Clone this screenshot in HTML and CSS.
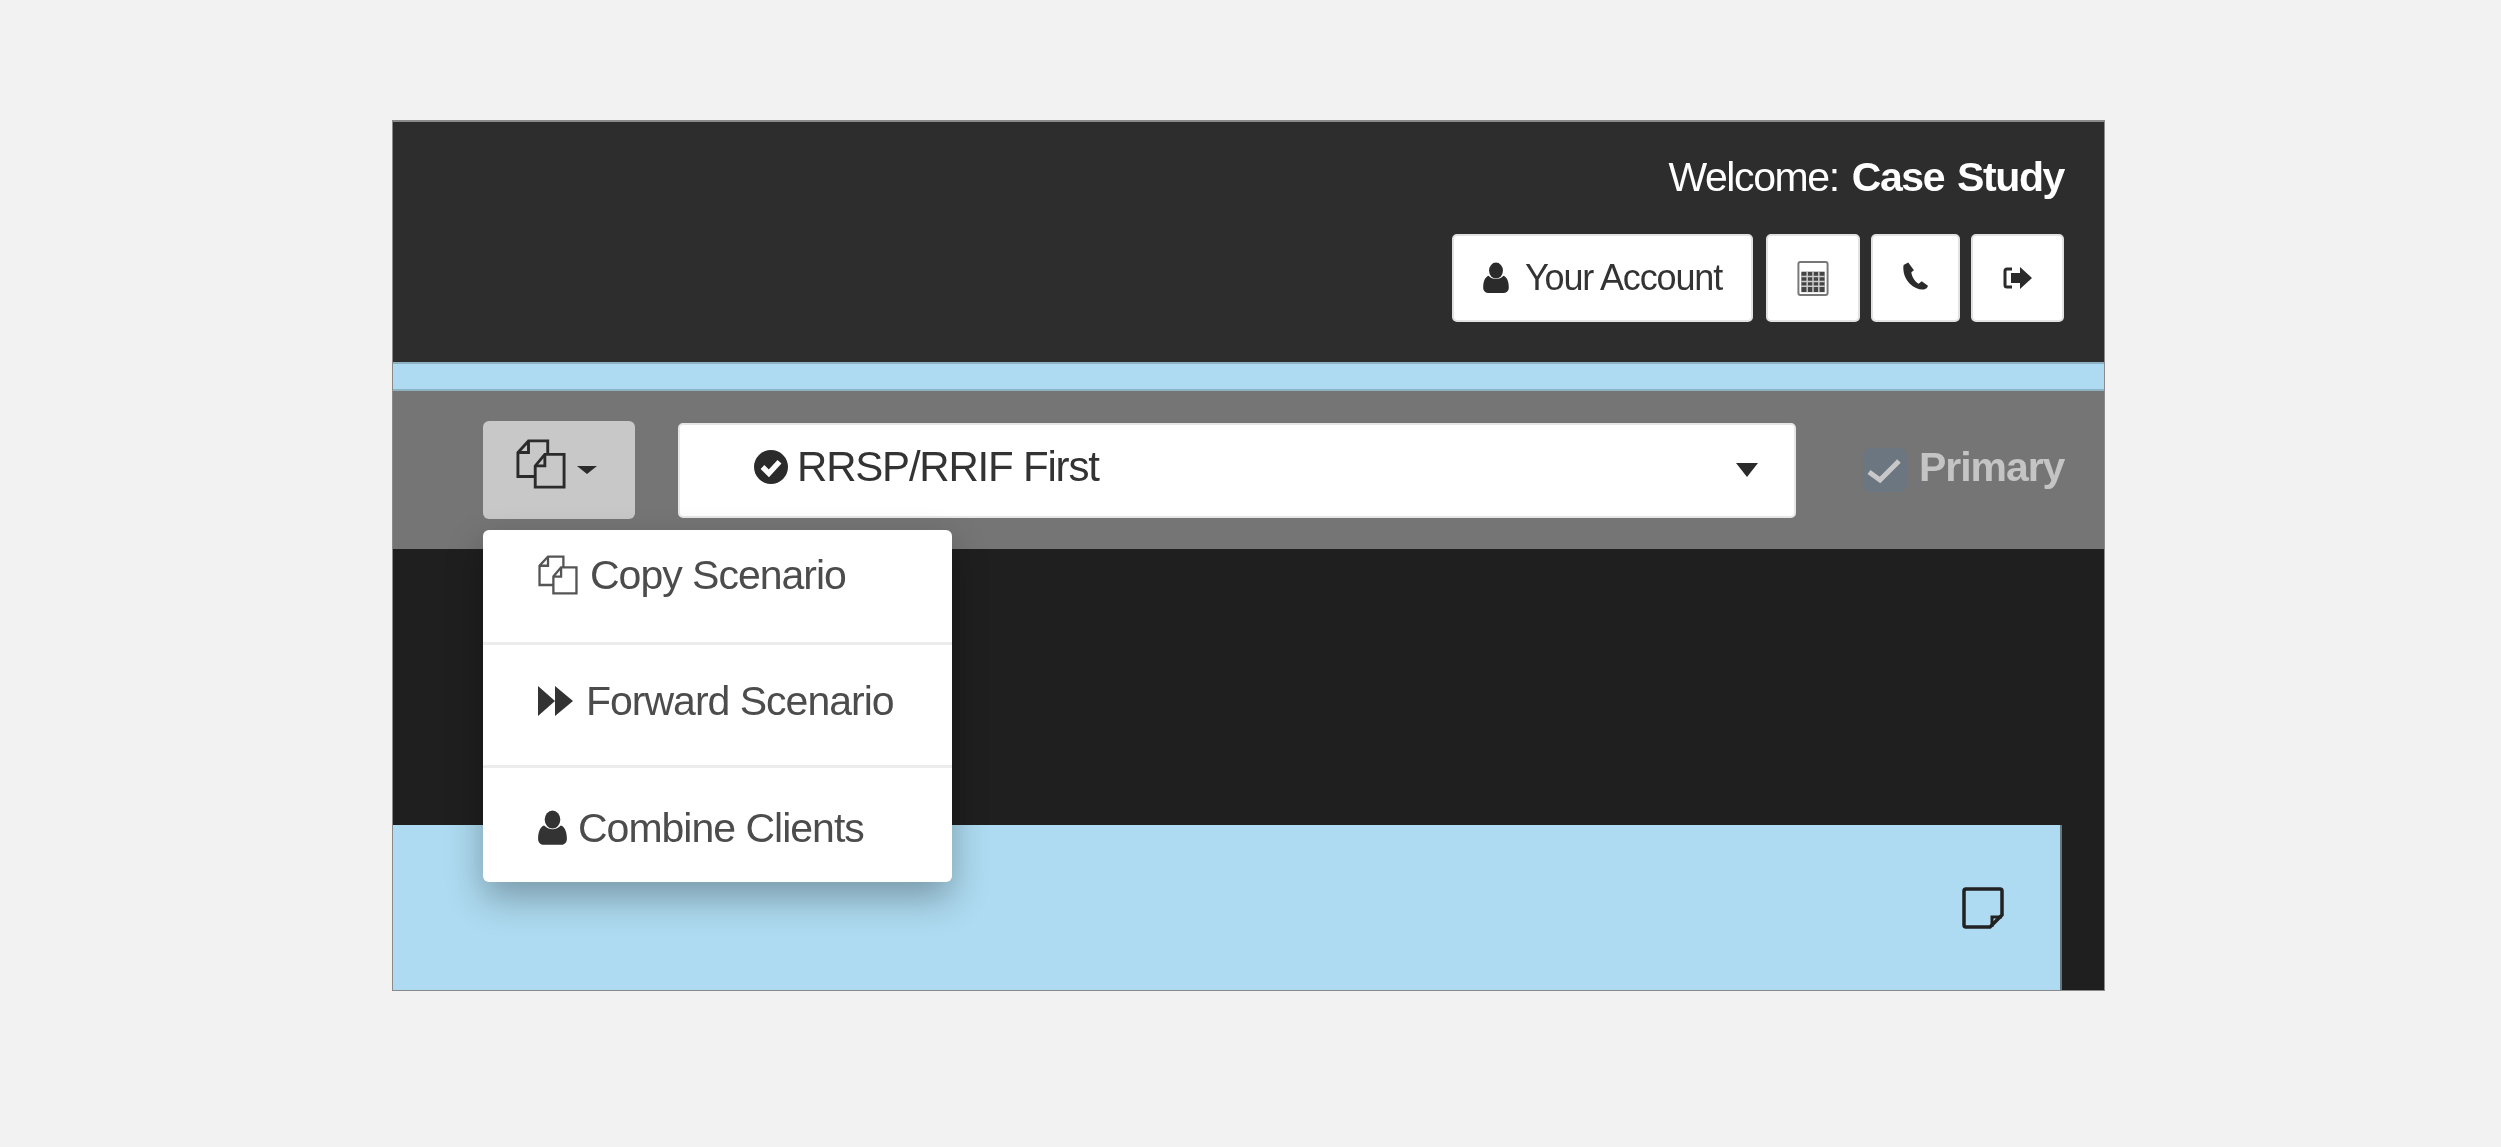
FILE: index.html
```html
<!DOCTYPE html>
<html lang="en">
<head>
  <meta charset="UTF-8">
  <title>Scenario</title>
  <link rel="stylesheet" href="styles.css">
</head>
<body>
  <div class="frame">
    <!-- Top header -->
    <div class="header">
      <div class="welcome">Welcome: <b>Case Study</b></div>
      <div class="header-buttons">
        <button class="btn btn-account">
          <svg class="icon icon-user" viewBox="0 0 24 30"><ellipse cx="12" cy="8" rx="6.500" ry="7.500" fill="#2b2b2b"/><path d="M5 13c2 2 4.300 3 7 3s5-1 7-3c3 1 5 5 5 11 0 3-1.800 5-4.500 5h-15C1.800 29 0 27 0 24c0-6 2-10 5-11z" fill="#2b2b2b"/></svg>
          Your Account
        </button>
        <button class="btn btn-calc">
          <svg class="icon icon-calc" viewBox="0 0 32 36"><rect x="1" y="1" width="30" height="34" rx="2" fill="#fff" stroke="#777" stroke-width="2"/><path d="M4 11h24v21H4z" fill="#444"/><path d="M10 11v21M16 11v21M22 11v21M4 16h24M4 21h24M4 26h24" stroke="#ccc" stroke-width="1.500"/></svg>
        </button>
        <button class="btn btn-phone">
          <svg class="icon icon-phone" viewBox="0 0 26 28"><path d="M6 1 1.500 3.500C.5 10 3 17 7.500 21.500 11.500 25.500 17 27.500 21 27c2 0 3.500-1.500 4-3.500l-6-4.500-3 2.500c-3-1.500-6.500-6-7-11l2.500-2z" fill="#2b2b2b"/></svg>
        </button>
        <button class="btn btn-logout">
          <svg class="icon icon-logout" viewBox="0 0 30 24"><path d="M9 3H4a2 2 0 0 0-2 2v14a2 2 0 0 0 2 2h5" fill="none" stroke="#2b2b2b" stroke-width="3"/><path d="M8 7h9V1l12 11-12 11v-6H8z" fill="#2b2b2b"/></svg>
        </button>
      </div>
    </div>

    <div class="strip"></div>

    <!-- Scenario toolbar -->
    <div class="toolbar">
      <div class="copy-group">
        <button class="btn-copy">
          <svg class="icon icon-files" viewBox="0 0 52 52"><use href="#files"/></svg>
          <span class="caret"></span>
        </button>
        <ul class="menu">
          <li class="menu-item item-copy">
            <svg class="icon icon-files-small" viewBox="0 0 52 52"><use href="#files"/></svg>
            Copy Scenario
          </li>
          <li class="menu-item item-forward">
            <svg class="icon icon-forward" viewBox="0 0 36 32"><path d="M0 1l17 15L0 31zM17 1l18 15-18 15z" fill="#333"/></svg>
            Forward Scenario
          </li>
          <li class="menu-item item-combine">
            <svg class="icon icon-user-menu" viewBox="0 0 24 30"><ellipse cx="12" cy="8" rx="6.500" ry="7.500" fill="#333"/><path d="M5 13c2 2 4.300 3 7 3s5-1 7-3c3 1 5 5 5 11 0 3-1.800 5-4.500 5h-15C1.800 29 0 27 0 24c0-6 2-10 5-11z" fill="#333"/></svg>
            Combine Clients
          </li>
        </ul>
      </div>

      <div class="scenario-select">
        <svg class="icon icon-check-circle" viewBox="0 0 32 32"><circle cx="16" cy="16" r="16" fill="#2b2b2b"/><path d="M8 16l6 6 10-11" fill="none" stroke="#fff" stroke-width="5"/></svg>
        <span class="select-label">RRSP/RRIF First</span>
        <span class="select-arrow"></span>
      </div>

      <div class="primary">
        <span class="checkbox">
          <svg viewBox="0 0 44 44"><path d="M6 24l11 8 19-19" fill="none" stroke="#c8c8c8" stroke-width="5"/></svg>
        </span>
        <b>Primary</b>
      </div>
    </div>

    <div class="content">
      <div class="panel">
        <svg class="icon icon-note" viewBox="0 0 44 44"><path d="M5 3h34a2 2 0 0 1 2 2v24L29 41H5a2 2 0 0 1-2-2V5a2 2 0 0 1 2-2z" fill="none" stroke="#222" stroke-width="3.500"/><path d="M41 31H31v10" fill="none" stroke="#222" stroke-width="3"/></svg>
      </div>
    </div>
  </div>

  <svg class="defs" width="0" height="0">
    <symbol id="files" viewBox="0 0 52 52">
      <path d="M33 16V2H13L2 14v25h18" fill="none" stroke="currentColor" stroke-width="3"/>
      <path d="M13 2v12H2" fill="none" stroke="currentColor" stroke-width="3"/>
      <path d="M30 16h20v34H20V28z" fill="none" stroke="currentColor" stroke-width="3"/>
      <path d="M30 16v12H20" fill="none" stroke="currentColor" stroke-width="3"/>
    </symbol>
  </svg>
</body>
</html>
```
FILE: styles.css
```css
* {
  box-sizing: border-box;
  margin: 0;
  padding: 0;
}

body {
  background: #f2f2f2;
  font-family: "Liberation Sans", Arial, sans-serif;
  color: #333;
  min-height: 100vh;
  overflow: hidden;
}

.defs {
  display: block;
}

.icon {
  display: block;
  flex: none;
}

/* the source capture is a soft, upscaled image */
.frame {
  width: 1713px;
  height: 871px;
  margin: 120px 0 0 392px;
  border: 2px solid #8a8a8a;
  border-width: 2px 1px 1px 1px;
  background: #1f1f1f;
  display: flex;
  flex-direction: column;
  overflow: hidden;
  filter: blur(0.6px);
}

/* Header */
.header {
  height: 240px;
  flex: none;
  background: #2d2d2d;
  padding: 29px 40px 0 0;
  display: flex;
  flex-direction: column;
  align-items: flex-end;
}

.welcome {
  color: #fff;
  font-size: 41px;
  line-height: 52px;
  letter-spacing: -1.4px;
  word-spacing: 3px;
}

.header-buttons {
  display: flex;
  gap: 11px;
  margin-top: 31px;
}

.btn {
  height: 88px;
  background: #fff;
  border: 2px solid #e2e2e2;
  border-radius: 5px;
  display: flex;
  align-items: center;
  justify-content: center;
  font: inherit;
  color: #333;
}

.btn-account {
  width: 301px;
  gap: 16px;
  margin-right: 2px;
  font-size: 36px;
  letter-spacing: -1.15px;
}

.btn-calc { width: 94px; }
.btn-phone { width: 89px; }
.btn-logout { width: 93px; }

.icon-user { width: 26px; height: 32px; }
.icon-calc { width: 32px; height: 35px; }
.icon-phone { width: 27px; height: 30px; margin: 0 0 4px -1px; }
.icon-logout { width: 30px; height: 24px; }

.strip {
  height: 29px;
  flex: none;
  background: #aedbf1;
  border-top: 2px solid #8db2c4;
  border-bottom: 2px solid #8db2c4;
}

/* Toolbar */
.toolbar {
  height: 158px;
  flex: none;
  background: #757575;
  padding-left: 90px;
  display: flex;
  align-items: center;
  position: relative;
}

.copy-group {
  position: relative;
}

.btn-copy {
  width: 152px;
  height: 98px;
  background: #c8c8c8;
  border: 0;
  border-radius: 6px;
  display: flex;
  align-items: center;
  padding: 0 0 12px 31px;
  gap: 9px;
  color: #2b2b2b;
}

.icon-files { width: 54px; height: 50px; }

.caret {
  margin-top: 12px;
  border-top: 8px solid #2b2b2b;
  border-left: 10px solid transparent;
  border-right: 10px solid transparent;
}

.menu {
  position: absolute;
  top: 109px;
  left: 0;
  width: 469px;
  height: 352px;
  background: #fff;
  border-radius: 6px;
  list-style: none;
  box-shadow: 0 16px 36px rgba(0, 0, 0, 0.3);
  z-index: 2;
}

.menu-item {
  display: flex;
  align-items: center;
  padding-left: 55px;
  font-size: 41px;
  letter-spacing: -1px;
  border-bottom: 3px solid #ececec;
  color: #4c4c4c;
}

.item-copy { height: 115px; gap: 12px; padding-bottom: 22px; }
.item-forward { height: 123px; gap: 12px; padding-bottom: 8px; }
.item-combine { height: 114px; gap: 11px; padding-top: 6px; border-bottom: 0; }

.icon-files-small { width: 40px; height: 40px; color: #555; }
.icon-forward { width: 36px; height: 32px; }
.icon-user-menu { width: 29px; height: 36px; }

.scenario-select {
  width: 1118px;
  height: 95px;
  margin-left: 43px;
  background: #fff;
  border: 2px solid #e6e6e6;
  border-radius: 5px;
  display: flex;
  align-items: center;
  padding: 0 36px 6px 74px;
  font-size: 42px;
  letter-spacing: -1.2px;
}

.icon-check-circle { width: 34px; height: 34px; margin-right: 9px; }

.select-label {
  flex: 1;
}

.select-arrow {
  margin-top: 6px;
  border-top: 14px solid #2b2b2b;
  border-left: 11px solid transparent;
  border-right: 11px solid transparent;
}

.primary {
  margin-left: 67px;
  display: flex;
  align-items: center;
  gap: 12px;
  font-size: 41px;
  letter-spacing: -1.05px;
  color: #c4c4c4;
  margin-bottom: 6px;
}

.checkbox {
  width: 44px;
  height: 44px;
  background: #6b7680;
  border-radius: 8px;
  margin-top: 6px;
}

/* Blue panel */
.content {
  flex: 1;
  padding: 276px 42px 0 0;
}

.panel {
  height: 100%;
  background: #aedbf1;
  border-right: 2px solid #63787f;
  display: flex;
  justify-content: flex-end;
  padding: 61px 55px 0 0;
}

.icon-note { width: 44px; height: 44px; }
```
